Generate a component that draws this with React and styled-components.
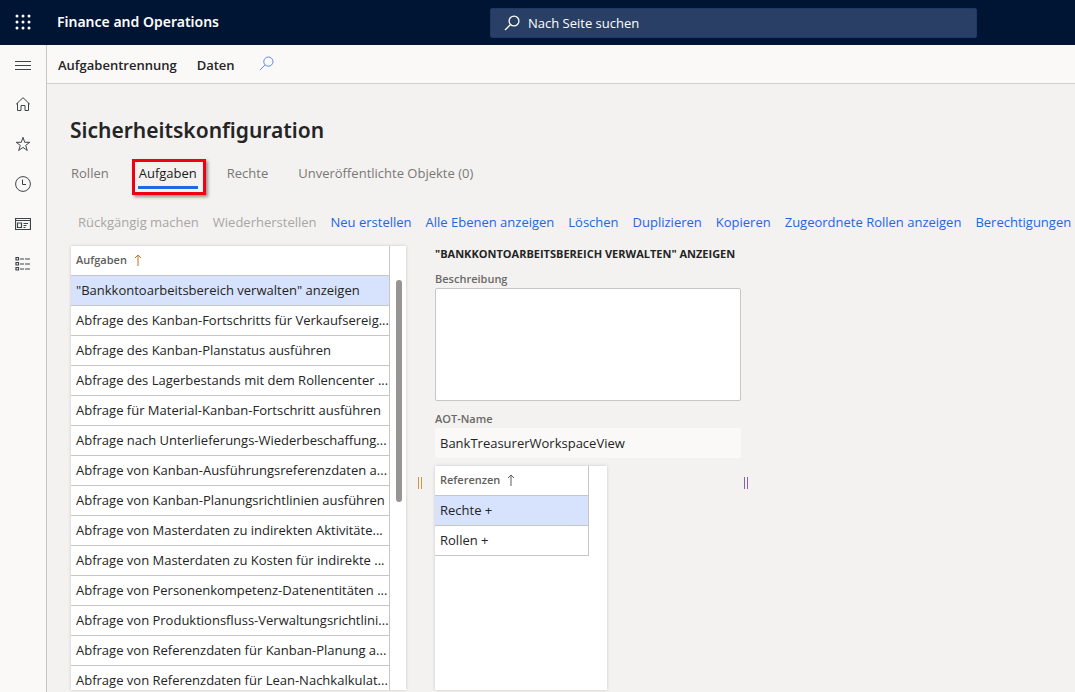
import React, { useState } from 'react';
import styled, { createGlobalStyle, css } from 'styled-components';

const GlobalStyle = createGlobalStyle`
  *, *::before, *::after {
    box-sizing: border-box;
  }
  body {
    margin: 0;
    background: #f3f2f1;
    color: #242424;
    font-family: "Segoe UI", "Open Sans", "Noto Sans", sans-serif;
    font-size: 13px;
    line-height: 20px;
  }
  button, input, textarea {
    font: inherit;
    color: inherit;
  }
  button {
    padding: 0;
    border: 0;
    background: none;
    white-space: nowrap;
    cursor: pointer;
  }
`;

const headingFont = '"Segoe UI", "Noto Sans", sans-serif';

const Shell = styled.div`
  display: grid;
  grid-template-columns: 47px minmax(0, 1fr);
  grid-template-rows: 45px minmax(0, 1fr);
  height: 100vh;
  overflow: hidden;
`;

const TopBar = styled.header`
  grid-column: 1 / -1;
  display: grid;
  grid-template-columns: 490px minmax(0, 1fr) 98px;
  align-items: center;
  background: #001433;
  color: #fff;
`;

const Brand = styled.div`
  display: flex;
  align-items: center;
  gap: 26px;
  padding: 0 0 1px 15px;
  font-family: ${headingFont};
  font-size: 14px;
  font-weight: 600;
`;

const IconButton = styled.button`
  display: flex;
  align-items: center;
  justify-content: center;
  width: 16px;
  height: 16px;
`;

const SearchBox = styled.label`
  display: flex;
  align-items: center;
  gap: 8px;
  height: 30px;
  padding: 0 13px;
  border: 1px solid #1d3965;
  border-radius: 2px;
  background: #293f66;

  input {
    flex: 1;
    min-width: 0;
    padding: 0;
    border: 0;
    outline: 0;
    background: none;
  }
  input::placeholder {
    color: #fff;
    opacity: 1;
  }
`;

const SideBar = styled.nav`
  display: flex;
  flex-direction: column;
  align-items: center;
  gap: 24px;
  padding-top: 11px;
  border-right: 1px solid #c8c6c4;
  background: #faf9f8;
  color: #3b4648;
`;

const Content = styled.div`
  display: flex;
  flex-direction: column;
  min-width: 0;
  min-height: 0;
`;

const MenuBar = styled.nav`
  display: flex;
  flex: none;
  align-items: center;
  gap: 20px;
  height: 39px;
  padding: 2px 11px 0;
  border-bottom: 1px solid #d2d0ce;
  background: #faf9f8;
  font-weight: 600;
`;

const MenuSearch = styled(IconButton)`
  margin: 0 0 4px 4px;
  color: #5580ee;
`;

const Page = styled.main`
  display: flex;
  flex: 1;
  flex-direction: column;
  min-height: 0;
  padding: 31px 0 2px 23px;
`;

const Title = styled.h1`
  margin: 0;
  font-family: ${headingFont};
  font-size: 21px;
  font-weight: 600;
  line-height: 30px;
`;

const Tabs = styled.div`
  display: flex;
  gap: 28px;
  margin-top: 18px;
`;

const Tab = styled.button`
  position: relative;
  height: 26px;
  padding: 0 1px 6px;
  color: #7a7875;

  ${({ $active }) => $active && css`
    border-bottom: 3px solid #2266e3;
    padding-bottom: 3px;
    color: #1b1a19;

    &::after {
      content: '';
      position: absolute;
      inset: -4px -8px -9px -6px;
      border: 3px solid #f00010;
      box-shadow: 2px 2px 3px rgba(0, 0, 0, .4);
    }
  `}
`;

const Commands = styled.div`
  display: flex;
  flex: none;
  gap: 14px;
  margin-top: 23px;
  padding-left: 8px;
  overflow: hidden;
`;

const Command = styled.button`
  flex: none;
  color: #2266e3;

  &:disabled {
    color: #a8a6a4;
    cursor: default;
  }
`;

const Workspace = styled.div`
  display: flex;
  flex: 1;
  min-height: 0;
  margin-top: 14px;
  padding-left: 1px;
`;

const Card = styled.div`
  display: flex;
  flex: none;
  align-items: flex-start;
  width: ${({ $width }) => $width};
  overflow: hidden;
  background: #fff;
  box-shadow: 0 0 3px rgba(0, 0, 0, .18);
`;

const Grid = styled.table`
  flex: 1;
  min-width: 0;
  table-layout: fixed;
  border-collapse: collapse;
  border-right: 1px solid #c8c6c4;

  th, td {
    height: 30px;
    padding: 0 0 0 5px;
    overflow: hidden;
    border-bottom: 1px solid #c8c6c4;
    text-align: left;
    white-space: nowrap;
  }
  th {
    height: 29px;
  }
`;

const Row = styled.tr`
  background: ${({ $selected }) => ($selected ? '#d7e3fc' : '#fff')};
`;

const SortButton = styled.button`
  display: flex;
  align-items: center;
  gap: 7px;
  color: #605e5c;
  font-size: 11px;
  font-weight: 600;
`;

const ScrollTrack = styled.div`
  flex: none;
  width: 16px;
  padding: 34px 4px 0 6px;
`;

const ScrollThumb = styled.div`
  height: 222px;
  border-radius: 3px;
  background: #979593;
`;

const Splitter = styled.div`
  align-self: center;
  flex: none;
  width: 4px;
  height: 12px;
  margin: ${({ $margin }) => $margin};
  border: solid ${({ $color }) => $color};
  border-width: 0 1px;
`;

const Details = styled.section`
  display: flex;
  flex: 0 0 306px;
  flex-direction: column;
  min-height: 0;
`;

const DetailsTitle = styled.h2`
  margin: 0 0 8px;
  font-size: 11px;
  font-weight: 700;
  line-height: 16px;
  text-transform: uppercase;
  white-space: nowrap;
`;

const Label = styled.label`
  color: #6b6967;
  font-size: 11px;
  font-weight: 600;
  line-height: 18px;
`;

const Description = styled.textarea`
  height: 113px;
  margin-bottom: 9px;
  padding: 4px;
  border: 1px solid #c8c6c4;
  border-radius: 2px;
  background: #fff;
  resize: none;
`;

const ReadOnlyInput = styled.input`
  height: 30px;
  margin-bottom: 8px;
  padding: 0 5px;
  border: 0;
  border-radius: 2px;
  background: #faf9f8;
`;

const References = styled.div`
  display: flex;
  flex: 1;
  min-height: 0;
`;

const Gutter = styled.div`
  flex: none;
  width: 18px;
`;

const Svg = ({ children, size = 16, strokeWidth = 1 }) => (
  <svg
    width={size}
    height={size}
    viewBox="0 0 16 16"
    fill="none"
    stroke="currentColor"
    strokeWidth={strokeWidth}
    aria-hidden="true"
  >
    {children}
  </svg>
);

const WaffleIcon = () => (
  <Svg>
    {[2, 8, 14].map(y => [2, 8, 14].map(x => (
      <circle key={`${x}-${y}`} cx={x} cy={y} r="1.5" fill="currentColor" stroke="none" />
    )))}
  </Svg>
);

const SearchIcon = ({ size, strokeWidth }) => (
  <Svg size={size} strokeWidth={strokeWidth}>
    <circle cx="10" cy="6" r="4.9" />
    <path d="M6.4 9.6 1 15" />
  </Svg>
);

const ArrowUp = ({ color }) => (
  <svg width="8" height="12" viewBox="0 0 8 12" fill="none" stroke={color} aria-hidden="true">
    <path d="M4 12V1M1 4l3-3 3 3" />
  </svg>
);

const sideItems = [
  { label: 'Menü', icon: <path d="M0 5.5h16M0 9.5h16M0 13.5h16" /> },
  { label: 'Startseite', icon: <path d="M1.2 8.2 8 1.7l6.8 6.5M2.5 7v7.5H6v-5h4v5h3.5V7" /> },
  { label: 'Favoriten', icon: <path d="m8 1.3 1.7 5h5.1l-4.1 3.1 1.6 5.1L8 11.4l-4.3 3.1 1.6-5.1-4.1-3.1h5.1z" /> },
  { label: 'Zuletzt verwendet', icon: <><circle cx="8" cy="8" r="7.4" /><path d="M7.5 3.5v5H11" /></> },
  {
    label: 'Arbeitsbereiche',
    icon: <path d="M.5 2.5h15v11H.5zM.5 4.5h15M2.5 7h4v4.5h-4zM8.5 7.5H13M8.5 9.5h3M8.5 11.5h2" strokeWidth="1.2" />,
  },
  {
    label: 'Module',
    icon: <path d="M1 1.5h2.5V4H1zM1 6.5h2.5V9H1zM1 11.5h2.5V14H1zM5 3h4M10 3h5M5 8h4M10 8h5M5 13h4M10 13h5" strokeWidth="1.2" />,
  },
];

const tabs = ['Rollen', 'Aufgaben', 'Rechte', 'Unveröffentlichte Objekte (0)'];

const commands = [
  { label: 'Rückgängig machen', disabled: true },
  { label: 'Wiederherstellen', disabled: true },
  { label: 'Neu erstellen' },
  { label: 'Alle Ebenen anzeigen' },
  { label: 'Löschen' },
  { label: 'Duplizieren' },
  { label: 'Kopieren' },
  { label: 'Zugeordnete Rollen anzeigen' },
  { label: 'Berechtigungen' },
];

const duties = [
  '"Bankkontoarbeitsbereich verwalten" anzeigen',
  'Abfrage des Kanban-Fortschritts für Verkaufsereig...',
  'Abfrage des Kanban-Planstatus ausführen',
  'Abfrage des Lagerbestands mit dem Rollencenter ...',
  'Abfrage für Material-Kanban-Fortschritt ausführen',
  'Abfrage nach Unterlieferungs-Wiederbeschaffung...',
  'Abfrage von Kanban-Ausführungsreferenzdaten a...',
  'Abfrage von Kanban-Planungsrichtlinien ausführen',
  'Abfrage von Masterdaten zu indirekten Aktivitäte...',
  'Abfrage von Masterdaten zu Kosten für indirekte ...',
  'Abfrage von Personenkompetenz-Datenentitäten ...',
  'Abfrage von Produktionsfluss-Verwaltungsrichtlini...',
  'Abfrage von Referenzdaten für Kanban-Planung a...',
  'Abfrage von Referenzdaten für Lean-Nachkalkulat...',
];

function ListGrid({ title, rows, arrowColor }) {
  const [selected, setSelected] = useState(0);

  return (
    <Grid>
      <thead>
        <tr>
          <th>
            <SortButton>{title} <ArrowUp color={arrowColor} /></SortButton>
          </th>
        </tr>
      </thead>
      <tbody>
        {rows.map((row, index) => (
          <Row key={row} $selected={index === selected} onClick={() => setSelected(index)}>
            <td>{row}</td>
          </Row>
        ))}
      </tbody>
    </Grid>
  );
}

export default function App() {
  const [activeTab, setActiveTab] = useState('Aufgaben');

  return (
    <>
      <GlobalStyle />
      <Shell>
        <TopBar>
          <Brand>
            <IconButton aria-label="App-Startfeld"><WaffleIcon /></IconButton>
            <span>Finance and Operations</span>
          </Brand>
          <SearchBox>
            <SearchIcon strokeWidth={1.3} />
            <input type="text" aria-label="Nach Seite suchen" placeholder="Nach Seite suchen" />
          </SearchBox>
        </TopBar>

        <SideBar>
          {sideItems.map(({ label, icon }) => (
            <IconButton key={label} aria-label={label}><Svg>{icon}</Svg></IconButton>
          ))}
        </SideBar>

        <Content>
          <MenuBar>
            <button>Aufgabentrennung</button>
            <button>Daten</button>
            <MenuSearch aria-label="Suchen"><SearchIcon size={15} /></MenuSearch>
          </MenuBar>

          <Page>
            <Title>Sicherheitskonfiguration</Title>
            <Tabs role="tablist">
              {tabs.map(tab => (
                <Tab
                  key={tab}
                  role="tab"
                  aria-selected={tab === activeTab}
                  $active={tab === activeTab}
                  onClick={() => setActiveTab(tab)}
                >
                  {tab}
                </Tab>
              ))}
            </Tabs>
            <Commands>
              {commands.map(({ label, disabled }) => (
                <Command key={label} disabled={disabled}>{label}</Command>
              ))}
            </Commands>

            <Workspace>
              <Card $width="335px">
                <ListGrid title="Aufgaben" rows={duties} arrowColor="#b8741a" />
                <ScrollTrack><ScrollThumb /></ScrollTrack>
              </Card>
              <Splitter $margin="30px 13px 0 12px" $color="#c79a45" />
              <Details>
                <DetailsTitle>"Bankkontoarbeitsbereich verwalten" anzeigen</DetailsTitle>
                <Label htmlFor="description">Beschreibung</Label>
                <Description id="description" />
                <Label htmlFor="aot-name">AOT-Name</Label>
                <ReadOnlyInput id="aot-name" readOnly value="BankTreasurerWorkspaceView" />
                <References>
                  <Card $width="172px">
                    <ListGrid title="Referenzen" rows={['Rechte +', 'Rollen +']} arrowColor="#605e5c" />
                    <Gutter />
                  </Card>
                </References>
              </Details>
              <Splitter $margin="30px 0 0 3px" $color="#8764a8" />
            </Workspace>
          </Page>
        </Content>
      </Shell>
    </>
  );
}
